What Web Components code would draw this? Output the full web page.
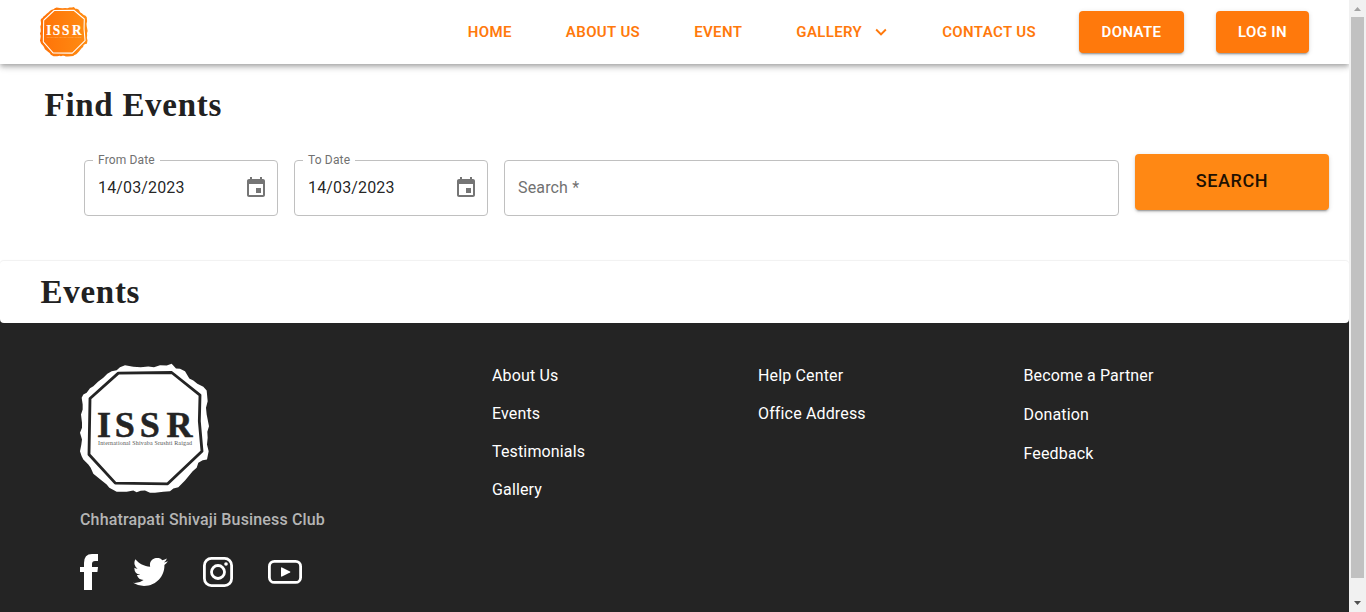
<!DOCTYPE html>
<html lang="en">
<head>
<meta charset="utf-8">
<title>ISSR - Events</title>
<style>
html,body{margin:0;height:100%;overflow:hidden;background:#fff}
body{font:400 16px/1.5 Roboto,"Liberation Sans",sans-serif;color:rgba(0,0,0,.87)}
</style>
</head>
<body>
<issr-app></issr-app>
<script>
const define = (name, html, setup) => {
  const t = document.createElement('template');
  t.innerHTML = html;
  customElements.define(name, class extends HTMLElement {
    constructor() {
      super();
      this.attachShadow({mode: 'open'}).appendChild(t.content.cloneNode(true));
      if (setup) setup(this, this.shadowRoot);
    }
  });
};

define('issr-logo', `
<style>:host{display:block;line-height:0;color:#fff}svg{width:100%;height:100%;overflow:visible}
text{font-family:"Liberation Serif",serif}</style>
<svg viewBox="0 0 130 130" preserveAspectRatio="none">
 <defs><linearGradient id="g"><stop offset="0" stop-color="#ff7208"/><stop offset="1" stop-color="#ff8c12"/></linearGradient></defs>
 <g transform="translate(-10 -9.500) scale(.33333)">
 <path class="seal" fill="#fff" stroke-linejoin="round" d="M150 38L165 32L190 37L212 38L235 36L252 38L270 32L290 33L305 28L318 42L330 43L345 50L358 72L370 78L382 88L400 97L410 108L413 140L408 160L410 180L417 215L412 232L413 250L411 270L416 290L411 315L398 317L385 325L380 340L368 350L345 378L325 398L310 402L300 410L280 412L255 415L240 415L225 408L212 409L200 413L190 408L170 412L155 412L140 412L118 400L110 390L95 378L70 358L62 340L55 330L40 315L35 305L30 290L34 270L36 255L30 235L36 220L36 205L33 180L38 165L38 150L35 130L40 120L50 115L60 101L70 95L84 82L100 70L112 58L125 50L140 47Z"/>
 <path class="ring" fill="none" stroke="#242424" stroke-width="8.500" stroke-linejoin="round" d="M145 56L305 54L390 122L388 200L396 290L293 388L136 386L57 300L60 132Z"/>
 </g>
 <text class="name" x="17 34.800 59.800 86.500" y="72.800" font-size="36" font-weight="700" fill="#242424" stroke="#242424" stroke-width=".5">ISSR</text>
 <text class="sub" x="18" y="80.500" font-size="6" fill="#555" textLength="94">International Shivaba Srushti Raigad</text>
</svg>`, (host, root) => {
  if (host.hasAttribute('brand')) {
    root.querySelector('.seal').setAttribute('fill', 'url(#g)');
    root.querySelector('.ring').setAttribute('stroke', '#fff');
    root.querySelector('.name').setAttribute('fill', '#fff');
    root.querySelector('.name').setAttribute('stroke', '#fff');
    root.querySelector('.sub').setAttribute('fill', '#ffc080');
  }
});

define('nav-button', `
<style>
:host{display:flex;align-items:center;box-sizing:border-box;height:42px;padding:0 11px;border-radius:4px;color:#ff790c;
font-size:15px;font-weight:600;letter-spacing:.37px;line-height:26px;white-space:nowrap}
:host([filled]){padding:0;justify-content:center;width:105px;background:#ff790c;color:#fff;
box-shadow:0 3px 1px -2px rgba(0,0,0,.2),0 2px 2px 0 rgba(0,0,0,.14),0 1px 5px 0 rgba(0,0,0,.12)}
:host([filled="small"]){width:93px}
svg{display:none;width:22px;height:22px;margin:0 -4px 0 8px}
:host([menu]) svg{display:block}
</style><slot></slot><svg viewBox="0 0 24 24"><path fill="currentColor" d="M7.410 8.590 12 13.170l4.590-4.580L18 10l-6 6-6-6z"/></svg>`);

define('site-header', `
<style>
:host{display:flex;position:relative;z-index:2;box-sizing:border-box;height:64px;padding:0 40px;align-items:center;background:#fff;
box-shadow:0 2px 4px -1px rgba(0,0,0,.2),0 4px 5px 0 rgba(0,0,0,.14),0 1px 10px 0 rgba(0,0,0,.12)}
issr-logo{width:48px;height:50px}
nav{display:flex;gap:32px;margin-left:auto}
</style>
<issr-logo brand></issr-logo>
<nav><nav-button>HOME</nav-button><nav-button>ABOUT US</nav-button><nav-button>EVENT</nav-button><nav-button menu>GALLERY</nav-button><nav-button>CONTACT US</nav-button><nav-button filled>DONATE</nav-button><nav-button filled="small">LOG IN</nav-button></nav>`);

define('section-title', `
<style>:host{display:block;font:700 33px/42px "Liberation Serif",serif;letter-spacing:.72px;color:#212121}</style><slot></slot>`);

define('outlined-field', `
<style>
:host{display:block;height:56px;position:relative}
.box{box-sizing:border-box;height:56px;border:1px solid #c0c0c0;border-radius:4px;padding:0 11px 0 13px;display:flex;align-items:center;justify-content:space-between;letter-spacing:.15px}
.label{position:absolute;left:9px;top:-9px;padding:0 5px;background:#fff;font-size:12px;line-height:18px;letter-spacing:.15px;color:#717171}
.label:empty{display:none}
svg{display:none;width:24px;height:24px;fill:#757575;margin-right:-2px}
:host([label]) svg{display:block}
:host(:not([label])) .box{color:#717171}
</style>
<div class="box"><span><slot></slot></span><svg viewBox="0 0 24 24"><path d="M17 12h-5v5h5v-5zM16 1v2H8V1H6v2H5c-1.110 0-1.990.900-1.990 2L3 19c0 1.100.890 2 2 2h14c1.100 0 2-.900 2-2V5c0-1.100-.900-2-2-2h-1V1h-2zm3 18H5V8h14v11z"/></svg></div>
<span class="label"></span>`, (host, root) => {
  root.querySelector('.label').textContent = host.getAttribute('label') || '';
});

define('event-search', `
<style>
:host{display:block;box-sizing:border-box;height:197px;padding:20px 20px 0 44.500px}
form{display:grid;grid-template-columns:194px 194px 1fr 194px;gap:16px;margin:28px 0 0 39.500px}
outlined-field{margin-top:6px}
button{font:500 18px/1 Roboto,sans-serif;letter-spacing:.6px;height:56px;padding:0 0 3px;border:0;border-radius:4px;background:#ff8814;color:#1f1102;
box-shadow:0 3px 1px -2px rgba(0,0,0,.2),0 2px 2px 0 rgba(0,0,0,.14),0 1px 5px 0 rgba(0,0,0,.12)}
</style>
<section-title>Find Events</section-title>
<form><outlined-field label="From Date">14/03/2023</outlined-field><outlined-field label="To Date">14/03/2023</outlined-field><outlined-field>Search *</outlined-field><button type="button">SEARCH</button></form>`);

define('event-list', `
<style>:host{display:block;background:linear-gradient(#fff 50%,#242424 50%)}
div{box-sizing:border-box;height:62px;padding:10px 40.500px;background:#fff;border-radius:4px;box-shadow:0 -1px 1px rgba(0,0,0,.06)}</style>
<div><section-title>Events</section-title></div>`);

define('footer-links', `
<style>:host{display:flex;flex-direction:column;gap:14px;color:#fff;line-height:24px;letter-spacing:.15px}
:host([wide]){gap:15px}</style><slot></slot>`);

define('social-icons', `
<style>:host{display:flex;align-items:center;height:36px}svg{display:block;fill:#fff}</style>
<svg width="18" height="36" viewBox="0 0 18 36"><path d="M18 0v7h-3q-3 0-3 3v3h6l-.6 5H12v18H4V18H0v-5h4V9Q4 0 12 0z"/></svg>
<svg width="35" height="28" viewBox="0 0 24 19.500" preserveAspectRatio="none" style="margin-left:35px"><path d="M23.950 2.310a10 10 0 0 1-2.830.780 4.960 4.960 0 0 0 2.160-2.730c-.950.560-2 .960-3.130 1.190a4.920 4.920 0 0 0-8.380 4.480C7.690 5.830 4.070 3.870 1.640.890a4.910 4.910 0 0 0 1.520 6.570 4.900 4.900 0 0 1-2.230-.610v.060a4.920 4.920 0 0 0 3.950 4.830 5 5 0 0 1-2.210.080 4.940 4.940 0 0 0 4.600 3.420A9.870 9.870 0 0 1 0 17.270a13.990 13.990 0 0 0 7.550 2.210c9.140 0 14.300-7.720 13.980-14.650a10 10 0 0 0 2.420-2.520z"/></svg>
<svg width="30" height="30" viewBox="0 0 30 30" style="margin-left:35px"><g fill="none" stroke="#fff" stroke-width="2.800"><rect x="1.400" y="1.400" width="27.200" height="27.200" rx="7"/><circle cx="15" cy="15" r="6.500"/></g><circle cx="23" cy="7" r="1.800"/></svg>
<svg width="34" height="24" viewBox="0 0 34 24" style="margin-left:35px"><rect x="1.400" y="1.400" width="31.200" height="21" rx="5" fill="none" stroke="#fff" stroke-width="2.800"/><path d="M13 8q0-1 1-.6l8 4q1 .6 0 1.200l-8 4q-1 .4-1-.6z"/></svg>`);

define('site-footer', `
<style>
:host{display:grid;grid-template-columns:412px 266px 265.500px 1fr;box-sizing:border-box;padding:41px 80px 0;background:#242424;flex:1}
issr-logo{width:130px;height:130px}
p{margin:14px 0 22px;line-height:24px;font-weight:500;letter-spacing:.15px;color:#b5b5b5}
</style>
<div><issr-logo></issr-logo><p>Chhatrapati Shivaji Business Club</p><social-icons></social-icons></div>
<footer-links><span>About Us</span><span>Events</span><span>Testimonials</span><span>Gallery</span></footer-links>
<footer-links><span>Help Center</span><span>Office Address</span></footer-links>
<footer-links wide><span>Become a Partner</span><span>Donation</span><span>Feedback</span></footer-links>`);

define('page-scrollbar', `
<style>:host{display:flex;flex-direction:column;align-items:center;width:17px;background:#f1f1f1}
svg{width:17px;height:17px;flex:none}
i{display:block;width:13px;height:561px;background:#c1c1c1}svg+i+svg{margin-top:auto}</style>
<svg viewBox="0 0 17 17"><path fill="#a3a3a3" d="M5 11h7L8.500 7z"/></svg><i></i><svg viewBox="0 0 17 17"><path fill="#505050" d="M5 6h7L8.500 10z"/></svg>`);

define('issr-app', `
<style>:host{display:flex;height:100vh}main{flex:1;display:flex;flex-direction:column;min-width:0;overflow:hidden}</style>
<main><site-header></site-header><event-search></event-search><event-list></event-list><site-footer></site-footer></main><page-scrollbar></page-scrollbar>`);
</script>
</body>
</html>
